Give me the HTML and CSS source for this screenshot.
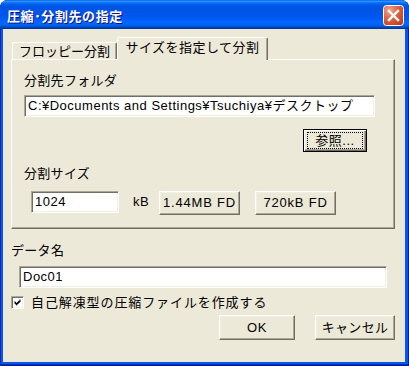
FILE: index.html
```html
<!DOCTYPE html>
<html lang="ja">
<head>
<meta charset="utf-8">
<title>圧縮・分割先の指定</title>
<link rel="stylesheet" href="styles.css">
</head>
<body>
<div class="window">
  <div class="titlebar">
    <span class="title">圧縮･分割先の指定</span>
    <span class="close">
      <svg width="21" height="21" viewBox="0 0 21 21">
        <defs>
          <radialGradient id="cg" cx="0.3" cy="0.25" r="0.9">
            <stop offset="0" stop-color="#F0A890"/>
            <stop offset="0.45" stop-color="#DD6644"/>
            <stop offset="1" stop-color="#C1391A"/>
          </radialGradient>
        </defs>
        <rect x="0.5" y="0.5" width="20" height="20" rx="3" ry="3" fill="url(#cg)" stroke="#FFFFFF"/>
        <path d="M6 6 L15 15 M15 6 L6 15" stroke="#FFFFFF" stroke-width="2.4" stroke-linecap="square"/>
      </svg>
    </span>
  </div>
  <div class="client">
    <div class="tabctl">
      <div class="tabs">
        <div class="tab">フロッピー分割</div>
        <div class="tab active">サイズを指定して分割</div>
      </div>
      <div class="panel">
        <div class="label">分割先フォルダ</div>
        <div class="edit path">C:¥Documents and Settings¥Tsuchiya¥デスクトップ</div>
        <div class="browse-row"><button class="btn default"><span class="focus">参照...</span></button></div>
        <div class="label lbl-size">分割サイズ</div>
        <div class="size-row">
          <div class="edit size">1024</div>
          <span class="unit">kB</span>
          <button class="btn fd">1.44MB FD</button>
          <button class="btn fd fd2">720kB FD</button>
        </div>
      </div>
    </div>
    <div class="label lbl-name">データ名</div>
    <div class="edit name">Doc01</div>
    <div class="check">
      <span class="box">
        <svg width="13" height="13" viewBox="0 0 13 13">
          <path d="M3 5h1v3h-1z M4 6h1v3h-1z M5 7h1v3h-1z M6 6h1v3h-1z M7 5h1v3h-1z M8 4h1v3h-1z M9 3h1v3h-1z" fill="#000"/>
        </svg>
      </span>
      <span class="check-text">自己解凍型の圧縮ファイルを作成する</span>
    </div>
    <div class="actions">
      <button class="btn act ok">OK</button>
      <button class="btn act cancel">キャンセル</button>
    </div>
  </div>
</div>
</body>
</html>
```
FILE: styles.css
```css
html, body {
  margin: 0;
  padding: 0;
  background: #ffffff;
}

.window {
  width: 409px;
  height: 366px;
  box-sizing: border-box;
  display: flex;
  flex-direction: column;
  background: #0A57E6;
  border-radius: 8px 8px 0 0;
  overflow: hidden;
  font-family: "Liberation Sans", "Noto Sans CJK JP", sans-serif;
  font-size: 13px;
  color: #000;
  box-shadow: inset 1px 0 #0025C4, inset -1px 0 #001A9E, inset 0 -1px #001A9E, inset 0 -2px #0030C8;
}

.titlebar {
  height: 29px;
  flex: none;
  display: flex;
  align-items: flex-start;
  justify-content: space-between;
  padding: 0 5px 0 7px;
  box-sizing: border-box;
  background: linear-gradient(to bottom, #0058ee 0%, #3593ff 4%, #288eff 6%, #127dff 8%, #036ffc 10%, #0262ee 14%, #0057e5 20%, #0054e3 24%, #0055eb 56%, #005bf5 66%, #026afe 76%, #0062ef 86%, #0052d6 92%, #0040ab 96%, #003092 100%);
}

.title {
  font-family: "Noto Sans CJK JP", sans-serif;
  font-weight: bold;
  font-size: 13px;
  line-height: 16px;
  margin-top: 8px;
  color: #fff;
  letter-spacing: 0.6px;
  text-shadow: 1px 1px #0F1089;
}

.close {
  width: 21px;
  height: 21px;
  margin-top: 5px;
  display: block;
}
.close svg { display: block; }

.client {
  flex: 1;
  margin: 0 4px 4px 3px;
  background: #ECE9D8;
  padding-left: 8px;
  display: flex;
  flex-direction: column;
  align-items: flex-start;
}

.tabctl {
  margin-top: 8px;
  width: 384px;
}

.tabs {
  display: flex;
  align-items: flex-end;
  height: 22px;
  padding-left: 1px;
}

.tab {
  box-sizing: border-box;
  height: 17px;
  width: 105px;
  line-height: 16px;
  padding-top: 1px;
  text-align: center;
  border-top: 1px solid #fff;
  border-left: 1px solid #fff;
  border-right: 1px solid #716F64;
  border-radius: 2px 2px 0 0;
  box-shadow: inset -1px 0 #ACA899;
  background: #ECE9D8;
  white-space: nowrap;
}

.tab.active {
  width: 151px;
  height: 23px;
  padding-top: 2px;
  margin-bottom: -1px;
  position: relative;
  z-index: 1;
  letter-spacing: 0.5px;
}

.panel {
  box-sizing: border-box;
  width: 384px;
  height: 170px;
  border: 1px solid;
  border-color: #fff #716F64 #716F64 #fff;
  box-shadow: inset -1px -1px #ACA899;
  padding: 13px 0 0 12px;
}

.label {
  line-height: 16px;
  height: 16px;
  white-space: nowrap;
  letter-spacing: 0.3px;
}

.edit {
  box-sizing: border-box;
  height: 22px;
  background: #fff;
  border: 1px solid;
  border-color: #ACA899 #fff #fff #ACA899;
  box-shadow: inset 1px 1px #716F64, inset -1px -1px #F1EFE2;
  padding-left: 3px;
  line-height: 20px;
  white-space: nowrap;
  overflow: hidden;
  letter-spacing: 0.5px;
}

.path {
  margin-top: 6px;
  width: 351px;
  letter-spacing: 0.5px;
}

.browse-row {
  margin-top: 12px;
  width: 351px;
  display: flex;
  justify-content: flex-end;
  padding-right: 8px;
  box-sizing: border-box;
}

.btn {
  box-sizing: border-box;
  margin: 0;
  padding: 0;
  font: inherit;
  color: #000;
  background: #ECE9D8;
  border: 1px solid;
  border-color: #fff #716F64 #716F64 #fff;
  box-shadow: inset -1px -1px #ACA899, inset 1px 1px #F1EFE2;
  line-height: 16px;
  white-space: nowrap;
  display: flex;
  align-items: center;
  justify-content: center;
}

.btn.default {
  width: 64px;
  height: 23px;
  border-color: #000;
  box-shadow: inset 1px 1px #fff, inset -1px -1px #716F64, inset -2px -2px #ACA899;
}

.focus {
  box-sizing: border-box;
  width: 56px;
  height: 17px;
  border: 1px dotted #000;
  display: flex;
  align-items: center;
  justify-content: center;
  letter-spacing: 0.5px;
}

.lbl-size {
  margin-top: 14px;
}

.size-row {
  margin-top: 9px;
  display: flex;
  align-items: flex-start;
}

.size {
  width: 88px;
  margin-left: 7px;
}

.unit {
  width: 26px;
  margin-left: 14px;
  line-height: 22px;
  letter-spacing: 0.6px;
}

.fd {
  width: 81px;
  height: 24px;
  letter-spacing: 0.8px;
}
.fd2 {
  margin-left: 15px;
}

.lbl-name {
  margin-top: 14px;
}

.name {
  margin-top: 7px;
  margin-left: 8px;
  width: 368px;
}

.check {
  margin-top: 8px;
  height: 13px;
  display: flex;
  align-items: center;
}

.box {
  width: 13px;
  height: 13px;
  display: block;
}
.box svg {
  display: block;
  background: #fff;
  box-sizing: border-box;
  border: 1px solid;
  border-color: #ACA899 #fff #fff #ACA899;
  box-shadow: inset 1px 1px #716F64, inset -1px -1px #F1EFE2;
}

.check-text {
  margin-left: 7px;
  line-height: 16px;
  white-space: nowrap;
  letter-spacing: 0.9px;
}

.actions {
  margin-top: 6px;
  align-self: stretch;
  display: flex;
  justify-content: flex-end;
  gap: 20px;
  padding-right: 10px;
}

.act {
  height: 25px;
}
.ok { width: 76px; letter-spacing: 0.5px; }
.cancel { width: 80px; letter-spacing: 0.3px; }
```
